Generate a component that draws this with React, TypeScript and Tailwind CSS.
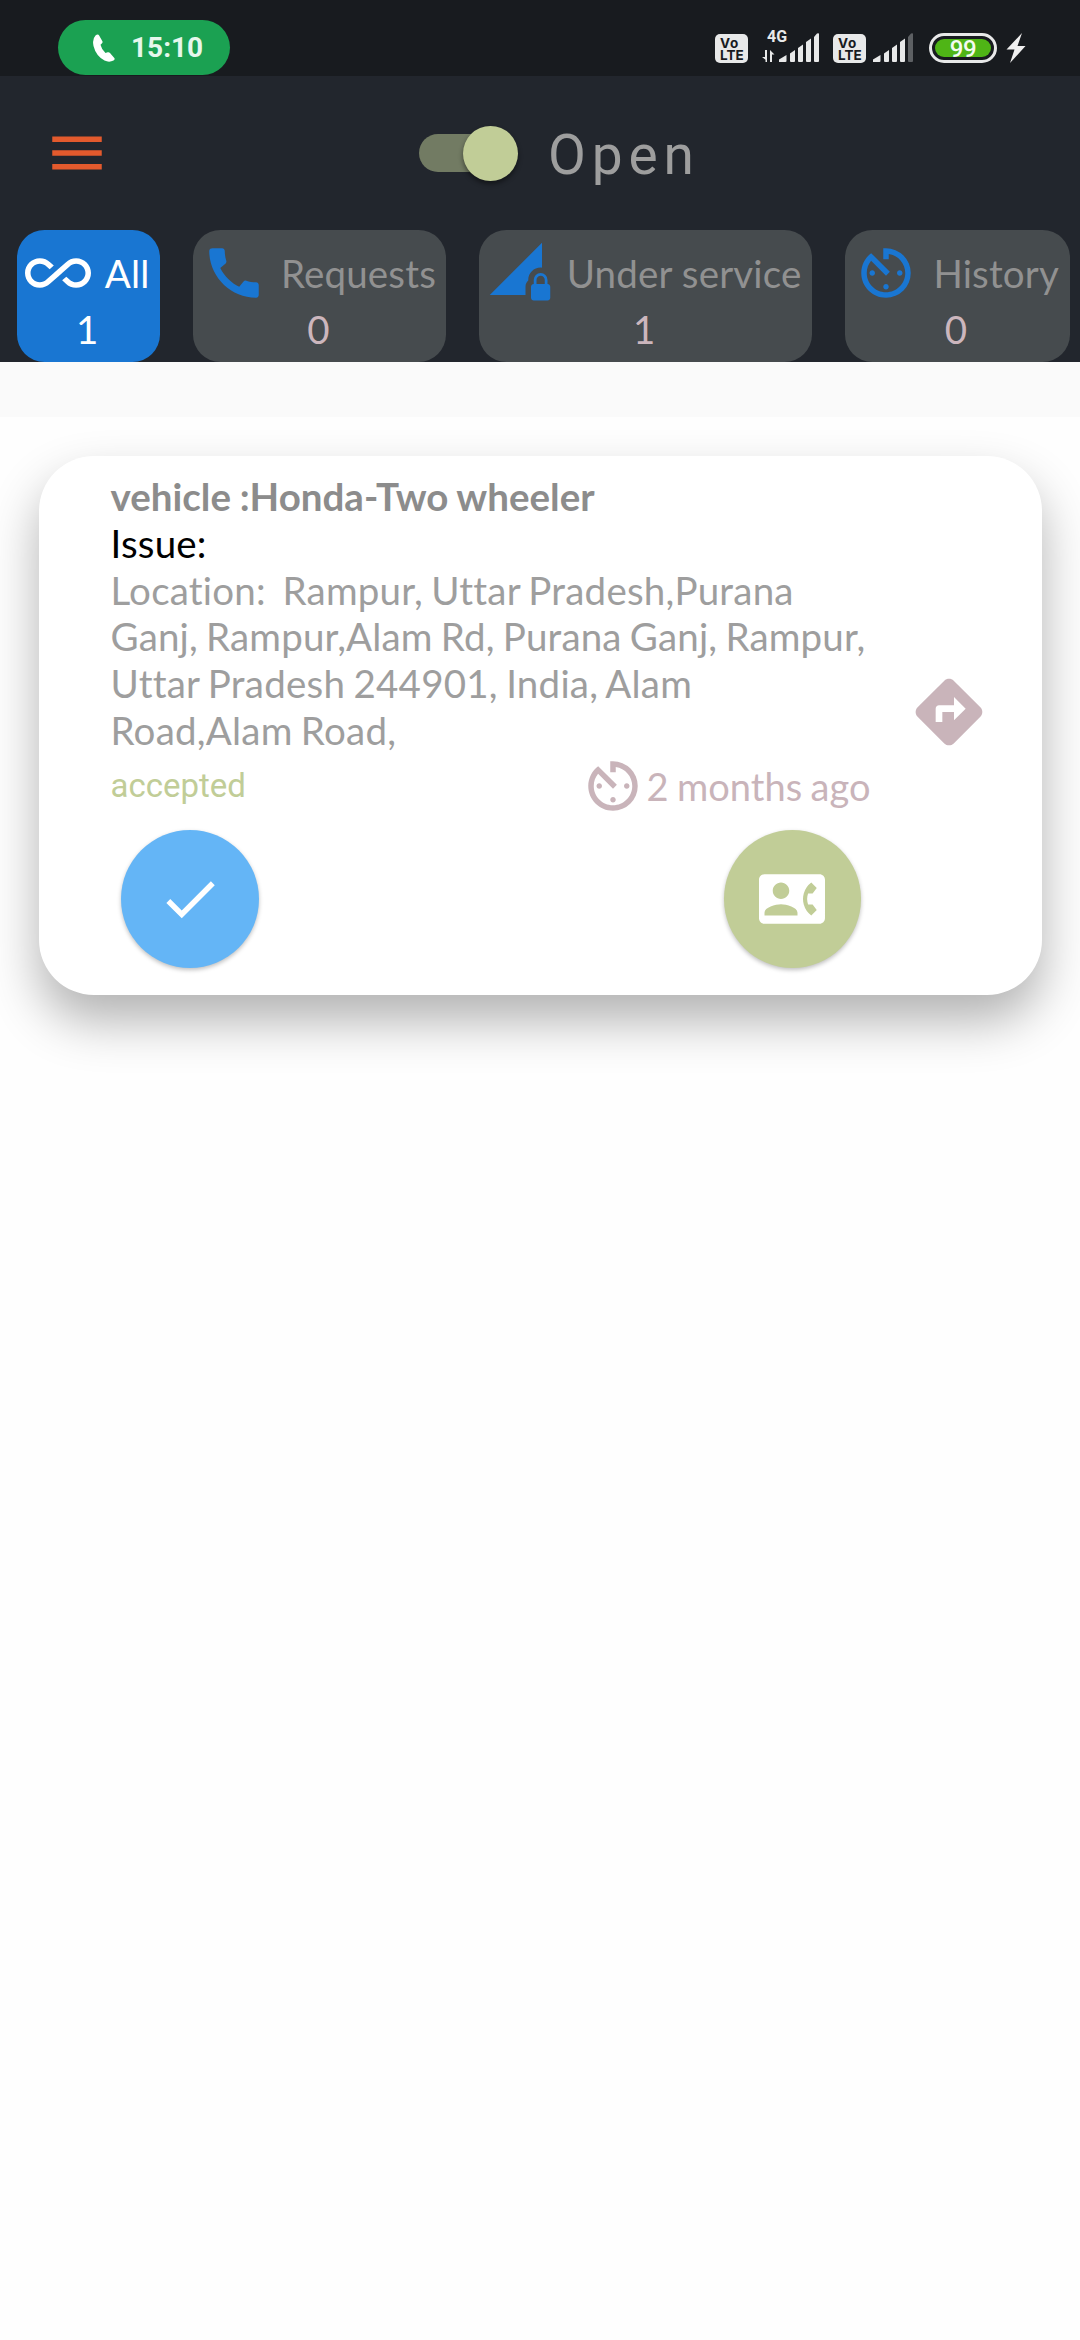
import type { ReactNode } from "react";
import {
  MdAllInclusive,
  MdAvTimer,
  MdCall,
  MdCheck,
  MdContactPhone,
  MdDirections,
  MdMenu,
  MdNetworkLocked,
} from "react-icons/md";

function VoLte() {
  return (
    <div className="flex h-[29px] w-[33px] flex-col items-start rounded-[5px] bg-[#e8e9e9] pt-[2.500px] pl-[5px] font-['Inter',sans-serif] text-[13.500px] leading-[12px] font-bold text-[#181b1f]">
      <span className="tracking-[0.8px]">Vo</span>
      <span className="tracking-[0.1px]">LTE</span>
    </div>
  );
}

function Signal({ dimLast }: { dimLast?: boolean }) {
  return (
    <svg width="41" height="30" viewBox="0 0 41 30" fill="#e8e9e9">
      <path d="M0 29V26.5L7.5 22V28a1 1 0 0 1-1 1Z" />
      <path d="M11 20.5L16 17V28a1 1 0 0 1-1 1H12a1 1 0 0 1-1-1Z" />
      <path d="M19 15L24 11.5V28a1 1 0 0 1-1 1H20a1 1 0 0 1-1-1Z" />
      <path d="M27 9L32 5.500V28a1 1 0 0 1-1 1H28a1 1 0 0 1-1-1Z" />
      <path
        d="M35 4L38 .5Q40 -.2 40 1V28a1 1 0 0 1-1 1H36a1 1 0 0 1-1-1Z"
        fill={dimLast ? "#5d6063" : "#e8e9e9"}
      />
    </svg>
  );
}

function StatusBar() {
  return (
    <div className="flex h-[76px] items-start bg-[#181b1f] pl-[58px]">
      <div className="mt-[20px] flex h-[55px] w-[172px] items-center rounded-full bg-[#1ba152] pl-[34px]">
        <svg width="24" height="28" viewBox="0 0 24 28" fill="#fff">
          <path d="M3.500 1.500Q6-.8 7.300 1.800L10.400 7.200Q11 8.500 9.800 9.600L8.500 10.800Q9.500 15.500 13.500 19L15.600 18.300Q17 17.800 18 19L22.300 24Q23.300 25.600 21.500 26.600Q17 28.700 12.500 26.500Q4 22 1.500 12Q0 5 3.500 1.500Z" />
        </svg>
        <span className="ml-[15px] pt-[1px] font-['Roboto',sans-serif] text-[28px] leading-[32px] font-bold text-[#e6f7ec]">
          15:10
        </span>
      </div>
      <div className="mt-[33px] ml-[485px] flex h-[30px]">
        <div className="mt-[1px]">
          <VoLte />
        </div>
        <div className="relative ml-[31px]">
          <Signal />
          <span className="absolute -top-[4px] -left-[12px] font-['Roboto',sans-serif] text-[16px] leading-[16px] font-bold text-[#e8e9e9]">
            4G
          </span>
          <svg className="absolute top-[17px] -left-[17px]" width="13" height="12" viewBox="0 0 13 12" fill="#e8e9e9">
            <path d="M3 0H5V12H3.500V9.800L0 7H3Z" />
            <path d="M8 0L12.500 4.500H10V12H8Z" />
          </svg>
        </div>
        <div className="mt-[1px] ml-[13px]">
          <VoLte />
        </div>
        <div className="ml-[7px]">
          <Signal dimLast />
        </div>
        <div className="ml-[15px] h-[30px] w-[68px] rounded-full border-[3px] border-[#e8e9e9] p-[3px]">
          <div className="flex h-full items-center justify-center rounded-full bg-[#4fb516] font-['Roboto',sans-serif] text-[24px] leading-[18px] font-medium text-[#f4fbf0]">
            <span className="pt-[1px] tracking-[-0.500px]">99</span>
          </div>
        </div>
        <svg className="ml-[9px]" width="20" height="30" viewBox="0 0 20 30" fill="#f0f0f0">
          <path d="M16 0L.5 16.500H8.500L4 30L19.500 13H11.500Z" />
        </svg>
      </div>
    </div>
  );
}

interface ChipProps {
  icon: ReactNode;
  label: string;
  count: number;
  box: string;
  active?: boolean;
}

function Chip({ icon, label, count, box, active }: ChipProps) {
  return (
    <div
      className={`flex h-[131.500px] shrink-0 flex-col items-center rounded-[27.500px] pt-[9.500px] pl-[8.250px] ${box} ${
        active ? "bg-[#1976d2] text-white" : "bg-[#464b4e] text-[#919191]"
      }`}
    >
      <div className="flex h-[66px] w-full items-center justify-between">
        <span className={active ? "text-white" : "text-[#1976d2]"}>{icon}</span>
        <span className="leading-[46px] tracking-[0.170px] whitespace-nowrap">{label}</span>
      </div>
      <span className={`leading-[46px] ${active ? "text-white" : "text-[#ccb6bd]"}`}>{count}</span>
    </div>
  );
}

function Header() {
  return (
    <header className="flex h-[286px] flex-col bg-[#22262d]">
      <div className="flex h-[154px] items-start">
        <MdMenu className="mt-[44px] ml-[44px] size-[66px] text-[#e35a2d]" />
        <div className="relative mt-[50px] ml-[309px] h-[55px] w-[99px]">
          <div className="mt-[7.500px] h-[38.500px] w-[91px] rounded-full bg-[#727b63]" />
          <div className="absolute top-[-0.500px] left-[44px] size-[55px] rounded-full bg-[#c1cd97] shadow-[0_3px_5px_rgba(0,0,0,0.45)]" />
        </div>
        <span className="mt-[46px] ml-[30px] font-['Roboto',sans-serif] text-[55px] leading-[66px] tracking-[5.850px] text-[#9e9e9e]">
          Open
        </span>
      </div>
      <div className="flex gap-[33px] pl-[16.500px] text-[38.500px]">
        <Chip active box="w-[143px] pr-[10px]" icon={<MdAllInclusive className="size-[66px]" />} label="All" count={1} />
        <Chip box="w-[253px] pr-[9.500px]" icon={<MdCall className="size-[66px]" />} label="Requests" count={0} />
        <Chip box="w-[333px] pr-[10px]" icon={<MdNetworkLocked className="size-[66px]" />} label="Under service" count={1} />
        <Chip box="w-[225.500px] pr-[11px]" icon={<MdAvTimer className="size-[66px]" />} label="History" count={0} />
      </div>
    </header>
  );
}

function RequestCard() {
  return (
    <article className="mx-[38.500px] h-[539.500px] rounded-[55px] bg-white pt-[17.500px] pl-[72px] text-[38.500px] leading-[46.750px] shadow-[0_26px_50px_rgba(0,0,0,0.3)]">
      <div className="flex">
        <div className="w-[768px]">
          <p className="font-bold [word-spacing:-0.6px] text-[#8c8c8c]">vehicle :Honda-Two wheeler</p>
          <p className="tracking-[0.200px] text-black">Issue:</p>
          <div className="[word-spacing:-1.8px] whitespace-pre text-[#9e9e9e]">
            <p className="tracking-[0.220px]">{"Location:  Rampur, Uttar Pradesh,Purana"}</p>
            <p className="tracking-[0.155px]">Ganj, Rampur,Alam Rd, Purana Ganj, Rampur,</p>
            <p className="tracking-[0.240px]">Uttar Pradesh 244901, India, Alam</p>
            <p className="tracking-[0.230px]">Road,Alam Road,</p>
          </div>
          <div className="-mt-[1px] flex h-[66px] items-center">
            <span className="w-[469px] pt-[2px] font-['Roboto',sans-serif] text-[33px] text-[#c1cd97]">accepted</span>
            <MdAvTimer className="size-[66px] text-[#c9b4ba]" />
            <span className="ml-[1px] pt-[1px] text-[38px] [word-spacing:-1.2px] text-[#c9b4ba]">2 months ago</span>
          </div>
          <div className="mt-[11.500px] flex justify-between pr-[17.500px] pl-[10.500px] text-white">
            <button className="flex size-[137.500px] items-center justify-center rounded-full bg-[#64b5f6] shadow-[0_2px_4px_rgba(0,0,0,0.25)]">
              <MdCheck className="size-[66px]" />
            </button>
            <button className="flex size-[137.500px] items-center justify-center rounded-full bg-[#c1cd97] shadow-[0_2px_4px_rgba(0,0,0,0.25)]">
              <MdContactPhone className="size-[66px]" />
            </button>
          </div>
        </div>
        <MdDirections className="mt-[199px] ml-[30px] size-[80px] text-[#c9b4ba]" />
      </div>
    </article>
  );
}

export default function App() {
  return (
    <div className="h-[2340px] w-[1080px] overflow-hidden bg-[#fefefe] font-['Lato',sans-serif]">
      <StatusBar />
      <Header />
      <div className="h-[55px] bg-[#fafafa]" />
      <main className="overflow-hidden pt-[38.500px] pb-[120px]">
        <RequestCard />
      </main>
    </div>
  );
}
